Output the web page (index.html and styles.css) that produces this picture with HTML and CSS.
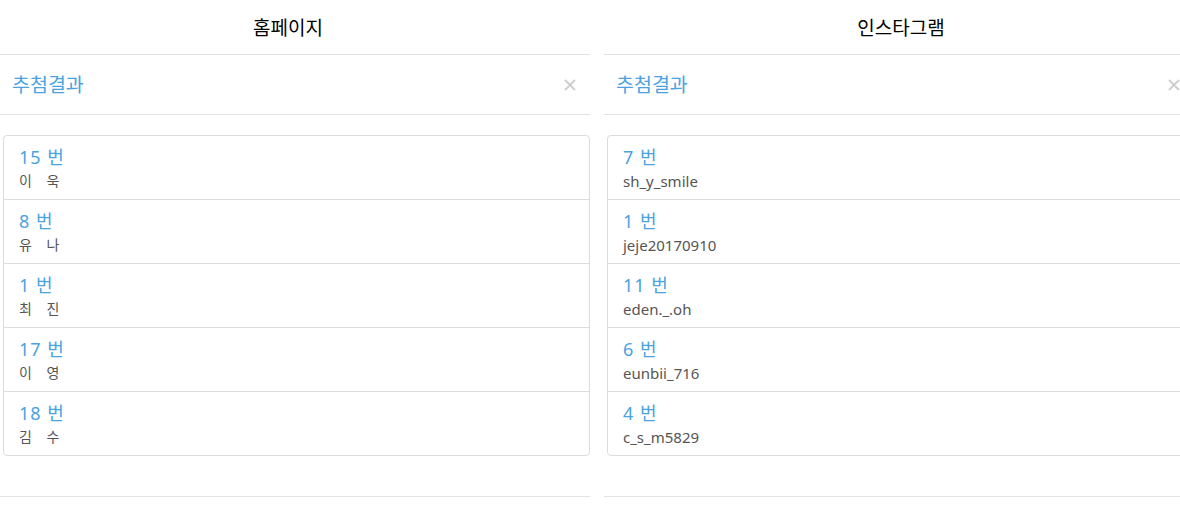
FILE: index.html
```html
<!DOCTYPE html>
<html lang="ko">
<head>
<meta charset="utf-8">
<title>추첨결과</title>
<link rel="stylesheet" href="styles.css">
</head>
<body>
<div class="page">
  <section class="col">
    <h2 class="col-title col-title-left">홈페이지</h2>
    <div class="panel-head">
      <h4 class="panel-title">추첨결과</h4>
      <span class="close" aria-label="close"><svg width="12" height="12" viewBox="0 0 12 12"><path d="M1 1 L11 11 M11 1 L1 11" stroke="#cfcfcf" stroke-width="2" fill="none"/></svg></span>
    </div>
    <div class="panel-body">
      <ul class="list">
        <li class="item"><div class="num">15 번</div><div class="name kr">이 욱</div></li>
        <li class="item"><div class="num">8 번</div><div class="name kr">유 나</div></li>
        <li class="item"><div class="num">1 번</div><div class="name kr">최 진</div></li>
        <li class="item"><div class="num">17 번</div><div class="name kr">이 영</div></li>
        <li class="item"><div class="num">18 번</div><div class="name kr">김 수</div></li>
      </ul>
    </div>
    <div class="panel-foot"></div>
  </section>
  <section class="col">
    <h2 class="col-title col-title-right">인스타그램</h2>
    <div class="panel-head">
      <h4 class="panel-title">추첨결과</h4>
      <span class="close" aria-label="close"><svg width="12" height="12" viewBox="0 0 12 12"><path d="M1 1 L11 11 M11 1 L1 11" stroke="#cfcfcf" stroke-width="2" fill="none"/></svg></span>
    </div>
    <div class="panel-body">
      <ul class="list">
        <li class="item"><div class="num">7 번</div><div class="name">sh_y_smile</div></li>
        <li class="item"><div class="num">1 번</div><div class="name">jeje20170910</div></li>
        <li class="item"><div class="num">11 번</div><div class="name">eden._.oh</div></li>
        <li class="item"><div class="num">6 번</div><div class="name">eunbii_716</div></li>
        <li class="item"><div class="num">4 번</div><div class="name">c_s_m5829</div></li>
      </ul>
    </div>
    <div class="panel-foot"></div>
  </section>
</div>
</body>
</html>
```

FILE: styles.css
```css
html, body {
  margin: 0;
  padding: 0;
  overflow: hidden;
  background: #fff;
}
body {
  font-family: "Noto Sans", "Noto Sans CJK KR", sans-serif;
  color: #333;
}
.page {
  display: grid;
  grid-template-columns: 590px 590px;
  column-gap: 14px;
  width: 1194px;
}
.col {
  display: flex;
  flex-direction: column;
  min-width: 0;
}
.col-title {
  margin: 0;
  height: 54px;
  line-height: 56px;
  font-size: 19px;
  font-weight: 400;
  color: #000;
  text-align: center;
  border-bottom: 1px solid #e3e3e3;
}
.col-title-left { padding-right: 14px; }
.col-title-right { padding-left: 4px; }
.panel-head {
  display: flex;
  align-items: center;
  justify-content: space-between;
  height: 60px;
  padding: 0 14px 0 12px;
  box-sizing: border-box;
  border-bottom: 1px solid #e3e3e3;
}
.panel-title {
  margin: 1px 0 0;
  font-size: 19.5px;
  font-weight: 400;
  line-height: 26px;
  color: #4aa3df;
}
.close {
  display: flex;
  width: 12px;
  height: 12px;
}
.panel-body {
  padding: 20px 0 20px 3px;
}
.list {
  list-style: none;
  margin: 0 0 20px;
  padding: 0;
  border: 1px solid #dcdcdc;
  border-radius: 4px;
}
.item {
  padding: 11px 15px 8px;
  height: 63px;
  box-sizing: border-box;
}
.item + .item {
  border-top: 1px solid #dcdcdc;
  height: 64px;
}
.num {
  font-size: 18px;
  line-height: 20px;
  letter-spacing: 1px;
  margin-bottom: 4px;
  color: #4aa3df;
}
.name {
  font-size: 15px;
  line-height: 20px;
  color: #555;
}
.name.kr {
  font-size: 14px;
  word-spacing: 11px;
}
.panel-foot {
  border-top: 1px solid #e3e3e3;
  height: 20px;
}
```
